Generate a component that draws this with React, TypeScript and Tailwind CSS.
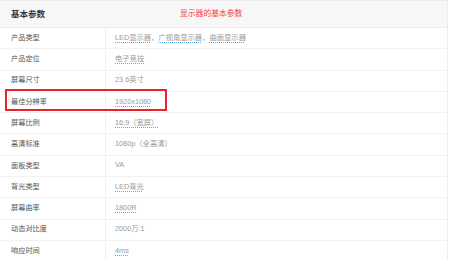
import React from "react"

type Part = { text: string; link?: boolean }

type Row = {
  label: string
  value: Part[]
}

const rows: Row[] = [
  {
    label: "产品类型",
    value: [
      { text: "LED显示器", link: true },
      { text: "，" },
      { text: "广视角显示器", link: true },
      { text: "，" },
      { text: "曲面显示器", link: true },
    ],
  },
  { label: "产品定位", value: [{ text: "电子竞技", link: true }] },
  { label: "屏幕尺寸", value: [{ text: "23.6英寸" }] },
  { label: "最佳分辨率", value: [{ text: "1920x1080", link: true }] },
  { label: "屏幕比例", value: [{ text: "16:9（宽屏）", link: true }] },
  { label: "高清标准", value: [{ text: "1080p（全高清）" }] },
  { label: "面板类型", value: [{ text: "VA" }] },
  { label: "背光类型", value: [{ text: "LED背光", link: true }] },
  { label: "屏幕曲率", value: [{ text: "1800R", link: true }] },
  { label: "动态对比度", value: [{ text: "2000万:1" }] },
  { label: "响应时间", value: [{ text: "4ms", link: true }] },
]

export default function App() {
  return (
    <div
      className="relative w-[450px] h-[260px] overflow-hidden bg-white"
      style={{ fontFamily: "'Liberation Sans', 'Noto Sans CJK SC', sans-serif" }}
    >
      <div className="w-[448px] border-t border-r border-[#ececec]">
        {/* Header */}
        <div className="flex items-center h-[27px] bg-[#f7f7f7] border-b border-[#eeeeee]">
          <div className="w-[180px] pl-[11px] text-[8.5px] font-bold text-[#333]">基本参数</div>
          <div className="text-[7.8px] text-[#ff3b3b]">显示器的基本参数</div>
        </div>

        {/* Rows */}
        {rows.map((row) => (
          <div key={row.label} className="flex h-[21.3px] border-b border-[#f2f2f2]">
            <div className="w-[106px] shrink-0 flex items-center pl-[11px] border-r border-[#efefef] text-[7.2px] text-[#555]">
              {row.label}
            </div>
            <div className="flex items-center pl-[9px] text-[7.3px] text-[#9a9a9a]">
              {row.value.map((p, i) =>
                p.link ? (
                  <span
                    key={i}
                    className="underline decoration-dotted decoration-[#5aaee8] underline-offset-[2px]"
                  >
                    {p.text}
                  </span>
                ) : (
                  <span key={i}>{p.text}</span>
                )
              )}
            </div>
          </div>
        ))}
      </div>

      {/* highlight box */}
      <div className="absolute left-[5px] top-[89px] w-[162px] h-[22px] border-[2.5px] border-[#e8232b]"></div>
    </div>
  )
}
